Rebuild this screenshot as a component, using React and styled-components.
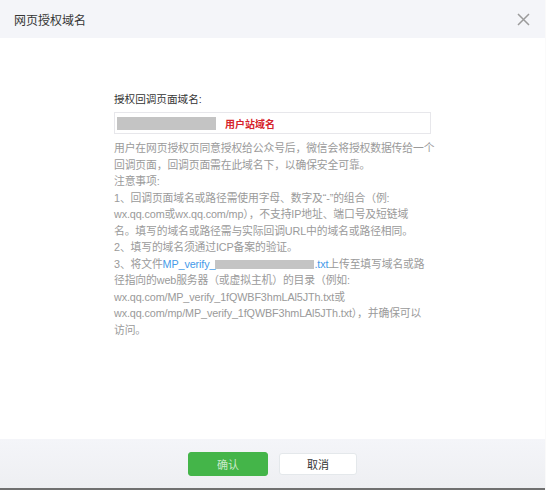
import React from 'react'
import styled, { createGlobalStyle } from 'styled-components'

const GlobalStyle = createGlobalStyle`
  html, body {
    margin: 0;
    padding: 0;
    background: #fafafa;
  }
  body {
    font-family: "Liberation Sans", "Noto Sans CJK SC", sans-serif;
  }
`

const Dialog = styled.div`
  width: 545px;
  height: 488px;
  display: flex;
  flex-direction: column;
  background: #fff;
  border-bottom: 2px solid #707070;
`

const Header = styled.div`
  height: 38px;
  flex: 0 0 38px;
  display: flex;
  align-items: center;
  justify-content: space-between;
  padding: 0 14px;
  background: #f4f5f9;
`

const Title = styled.h3`
  margin: 0;
  font-size: 12px;
  font-weight: normal;
  color: #353535;
`

const CloseButton = styled.button`
  border: 0;
  padding: 0;
  background: none;
  width: 13px;
  height: 13px;
  display: flex;
  margin-right: 1px;
`

const Body = styled.div`
  flex: 1;
  padding: 53px 0 0 114px;
`

const Label = styled.div`
  font-size: 10.6px;
  line-height: 16px;
  color: #353535;
  margin-bottom: 5px;
`

const InputBox = styled.div`
  width: 311px;
  height: 20px;
  border: 1px solid #e7e7eb;
  display: flex;
  align-items: center;
  padding: 0 2px;
  gap: 9px;
`

const Blur = styled.span`
  display: inline-block;
  width: ${p => p.w}px;
  height: ${p => p.h}px;
  background: #c4c4c4;
  vertical-align: middle;
  filter: ${p => (p.soft ? 'blur(0.6px)' : 'none')};
`

const Hint = styled.span`
  font-size: 10px;
  font-weight: bold;
  color: #d6232c;
`

const Desc = styled.p`
  margin: 6px 0 0;
  font-size: 10.8px;
  letter-spacing: -0.12px;
  line-height: 16.5px;
  color: #9a9a9a;
  white-space: nowrap;
`

const Link = styled.a`
  color: #459ae9;
  text-decoration: none;
`

const Footer = styled.div`
  flex: 0 0 49px;
  display: flex;
  justify-content: center;
  align-items: center;
  gap: 11px;
  background: linear-gradient(#f4f5f9, #eeeff2);
`

const Button = styled.button`
  width: ${p => (p.primary ? '80px' : '78px')};
  height: ${p => (p.primary ? '24px' : '22px')};
  border-radius: 3px;
  font-family: inherit;
  font-size: 11px;
  border: 1px solid ${p => (p.primary ? '#44b549' : '#e4e8eb')};
  background: ${p => (p.primary ? '#44b549' : '#fff')};
  color: ${p => (p.primary ? 'rgba(255,255,255,0.72)' : '#353535')};
  padding: 0;
`

const CloseIcon = () => (
  <svg width="13" height="13" viewBox="0 0 13 13">
    <path d="M1 1 L12 12 M12 1 L1 12" stroke="#9b9b9b" strokeWidth="1.5" fill="none" />
  </svg>
)

export default function App() {
  return (
    <>
      <GlobalStyle />
      <Dialog>
        <Header>
          <Title>网页授权域名</Title>
          <CloseButton aria-label="关闭">
            <CloseIcon />
          </CloseButton>
        </Header>
        <Body>
          <Label>授权回调页面域名:</Label>
          <InputBox>
            <Blur w={99} h={13} />
            <Hint>用户站域名</Hint>
          </InputBox>
          <Desc>
            用户在网页授权页同意授权给公众号后，微信会将授权数据传给一个<br />
            回调页面，回调页面需在此域名下，以确保安全可靠。<br />
            注意事项:<br />
            1、回调页面域名或路径需使用字母、数字及“-”的组合（例:<br />
            wx.qq.com或wx.qq.com/mp），不支持IP地址、端口号及短链域<br />
            名。填写的域名或路径需与实际回调URL中的域名或路径相同。<br />
            2、填写的域名须通过ICP备案的验证。<br />
            3、将文件<Link href="#">MP_verify_<Blur w={99} h={9} soft />.txt</Link>上传至填写域名或路<br />
            径指向的web服务器（或虚拟主机）的目录（例如:<br />
            wx.qq.com/MP_verify_1fQWBF3hmLAl5JTh.txt或<br />
            wx.qq.com/mp/MP_verify_1fQWBF3hmLAl5JTh.txt），并确保可以<br />
            访问。
          </Desc>
        </Body>
        <Footer>
          <Button primary>确认</Button>
          <Button>取消</Button>
        </Footer>
      </Dialog>
    </>
  )
}
